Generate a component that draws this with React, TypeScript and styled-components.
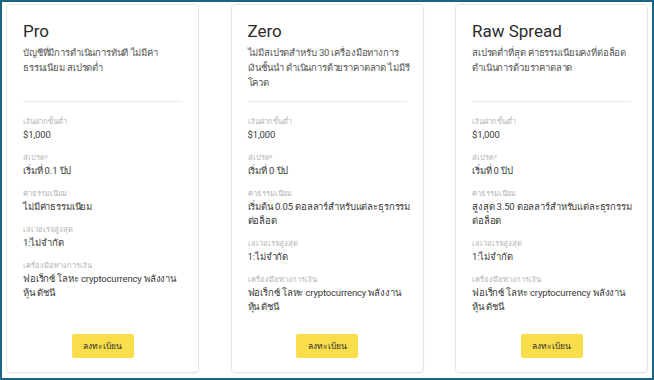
import styled, { createGlobalStyle } from "styled-components"

// every text block keeps the line breaks of the design, since the Thai
// fallback font wraps differently from the original one
type Detail = {
  label: string
  value: string[]
}

type Plan = {
  name: string
  blurb: string[]
  details: Detail[]
}

const instruments = ["ฟอเร็กซ์ โลหะ cryptocurrency พลังงาน", "หุ้น ดัชนี"]

const plans: Plan[] = [
  {
    name: "Pro",
    blurb: ["บัญชีที่มีการดำเนินการทันที ไม่มีค่า", "ธรรมเนียม สเปรดต่ำ"],
    details: [
      { label: "เงินฝากขั้นต่ำ", value: ["$1,000"] },
      { label: "สเปรด³", value: ["เริ่มที่ 0.1 ปิป"] },
      { label: "ค่าธรรมเนียม", value: ["ไม่มีค่าธรรมเนียม"] },
      { label: "เลเวอเรจสูงสุด", value: ["1:ไม่จำกัด"] },
      { label: "เครื่องมือทางการเงิน", value: instruments }
    ]
  },
  {
    name: "Zero",
    blurb: [
      "ไม่มีสเปรดสำหรับ 30 เครื่องมือทางการ",
      "เงินชั้นนำ ดำเนินการด้วยราคาตลาด ไม่มีรี",
      "โควต"
    ],
    details: [
      { label: "เงินฝากขั้นต่ำ", value: ["$1,000"] },
      { label: "สเปรด³", value: ["เริ่มที่ 0 ปิป"] },
      {
        label: "ค่าธรรมเนียม",
        value: ["เริ่มต้น 0.05 ดอลลาร์สำหรับแต่ละธุรกรรม", "ต่อล็อต"]
      },
      { label: "เลเวอเรจสูงสุด", value: ["1:ไม่จำกัด"] },
      { label: "เครื่องมือทางการเงิน", value: instruments }
    ]
  },
  {
    name: "Raw Spread",
    blurb: ["สเปรดต่ำที่สุด ค่าธรรมเนียมคงที่ต่อล็อต", "ดำเนินการด้วยราคาตลาด"],
    details: [
      { label: "เงินฝากขั้นต่ำ", value: ["$1,000"] },
      { label: "สเปรด³", value: ["เริ่มที่ 0 ปิป"] },
      {
        label: "ค่าธรรมเนียม",
        value: ["สูงสุด 3.50 ดอลลาร์สำหรับแต่ละธุรกรรม", "ต่อล็อต"]
      },
      { label: "เลเวอเรจสูงสุด", value: ["1:ไม่จำกัด"] },
      { label: "เครื่องมือทางการเงิน", value: instruments }
    ]
  }
]

const GlobalStyle = createGlobalStyle`
  body {
    margin: 0;
    background: #ffffff;
    font-family: Roboto, "Noto Sans", "Liberation Sans", sans-serif;
  }
`

const Frame = styled.div`
  box-sizing: border-box;
  width: 654px;
  height: 380px;
  border: 2px solid #1c6384;
  padding: 2px 4px 5px 4px;
  display: flex;
  justify-content: space-between;
  background: #ffffff;
`

const Card = styled.div`
  box-sizing: border-box;
  width: 193px;
  border: 1px solid #e6e6e6;
  border-radius: 4px;
  box-shadow: 0 1px 2px rgba(0, 0, 0, 0.04);
  padding: 14px 16px 14px 16px;
  display: flex;
  flex-direction: column;
`

const Header = styled.div`
  height: 82px;
`

const Title = styled.h2`
  margin: 0;
  font-size: 17px;
  line-height: 24px;
  font-weight: 400;
  color: #2b2b2b;
`

const Blurb = styled.p`
  margin: 2px 0 0;
  font-size: 9.5px;
  line-height: 15px;
  letter-spacing: -0.15px;
  color: #555555;
`

const Line = styled.span`
  display: block;
  white-space: nowrap;
`

const Divider = styled.hr`
  margin: 0;
  border: none;
  border-top: 1px solid #ebebeb;
`

const Details = styled.dl`
  margin: 14px 0 0;
  display: flex;
  flex-direction: column;
  gap: 10px;
`

const Item = styled.div`
  display: flex;
  flex-direction: column;
`

const Label = styled.dt`
  font-size: 7.5px;
  line-height: 12px;
  font-weight: 300;
  color: #b3b3b3;
  white-space: nowrap;
`

const Value = styled.dd`
  margin: 0;
  font-size: 9.5px;
  line-height: 14px;
  letter-spacing: -0.15px;
  color: #3a3a3a;
`

const Button = styled.button`
  margin: auto auto 0;
  width: 62px;
  height: 24px;
  border: none;
  border-radius: 2px;
  background: #f9de4b;
  color: #333333;
  font-family: inherit;
  font-weight: 300;
  font-size: 8.5px;
  cursor: pointer;
`

export default function App() {
  return (
    <>
      <GlobalStyle />
      <Frame>
        {plans.map(plan => (
          <Card key={plan.name}>
            <Header>
              <Title>{plan.name}</Title>
              <Blurb>
                {plan.blurb.map(line => (
                  <Line key={line}>{line}</Line>
                ))}
              </Blurb>
            </Header>
            <Divider />
            <Details>
              {plan.details.map(d => (
                <Item key={d.label}>
                  <Label>{d.label}</Label>
                  <Value>
                    {d.value.map(line => (
                      <Line key={line}>{line}</Line>
                    ))}
                  </Value>
                </Item>
              ))}
            </Details>
            <Button>ลงทะเบียน</Button>
          </Card>
        ))}
      </Frame>
    </>
  )
}
